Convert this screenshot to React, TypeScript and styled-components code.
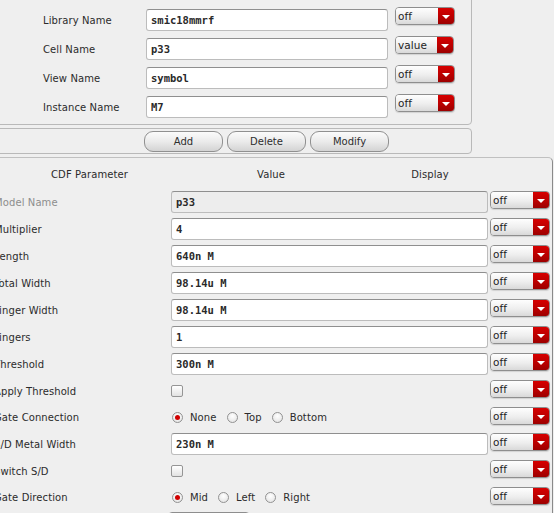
import React from "react";
import styled, { createGlobalStyle } from "styled-components";

const Global = createGlobalStyle`
  html, body { margin: 0; padding: 0; background: #efefef; }
  body { font-family: "DejaVu Sans", "Liberation Sans", sans-serif; }
`;

const Screen = styled.div`
  width: 554px;
  height: 513px;
  overflow: hidden;
  background: #efefef;
  font-family: "DejaVu Sans", "Liberation Sans", sans-serif;
  font-size: 10px;
  letter-spacing: 0.1px;
  color: #2b2b2b;
`;

const Canvas = styled.div`
  margin: -10px 0 0 -12px;
  display: flex;
  flex-direction: column;
  align-items: flex-start;
`;

const TopPanel = styled.div`
  box-sizing: border-box;
  width: 484px;
  border: 1px solid #b9b9b9;
  border-radius: 4px;
  padding: 14px 0 3px 54px;
  display: flex;
  flex-direction: column;
`;

const TopRow = styled.div`
  display: flex;
  align-items: flex-start;
  height: 29px;
`;

const TopLabel = styled.span`
  width: 103px;
  height: 22px;
  margin-top: 4px;
  display: flex;
  align-items: center;
`;

const Field = styled.div<{ $w: number; $disabled?: boolean }>`
  box-sizing: border-box;
  width: ${(p) => p.$w}px;
  height: 22px;
  border: 1px solid #bcbcbc;
  border-top-color: #8f8f8f;
  border-radius: 3px;
  background: ${(p) => (p.$disabled ? "#ededed" : "#ffffff")};
  padding-left: 4px;
  display: flex;
  align-items: center;
  font-family: "DejaVu Sans Mono", "Liberation Mono", monospace;
  font-weight: bold;
  font-size: 10.5px;
  letter-spacing: 0;
  color: #2a2a2a;
  white-space: pre;
`;

const TopField = styled(Field)`
  margin-top: 4px;
`;

const Drop = styled.div<{ $w: number }>`
  box-sizing: border-box;
  width: ${(p) => p.$w}px;
  height: 18px;
  display: flex;
  border: 1px solid #8e8e8e;
  border-radius: 4px;
  overflow: hidden;
  box-shadow: 0 1px 1px rgba(0, 0, 0, 0.12);
  align-self: flex-start;
`;

const DropText = styled.span`
  flex: 1;
  background: linear-gradient(#fefefe, #eeeeee 55%, #d9d9d9);
  padding-left: 2px;
  line-height: 16px;
  font-size: 10.5px;
  color: #1e1e1e;
`;

const DropArrow = styled.span`
  width: 16px;
  background: linear-gradient(#d60000, #b80000 60%, #9c0000);
  display: flex;
  align-items: center;
  justify-content: center;
  &::after {
    content: "";
    border-left: 4px solid transparent;
    border-right: 4px solid transparent;
    border-top: 4px solid #ffffff;
    margin-top: 1px;
  }
`;

const TopDrop = styled(Drop)`
  margin-left: 7px;
  margin-top: 2px;
`;

const ButtonBar = styled.div`
  box-sizing: border-box;
  width: 484px;
  margin-top: 3px;
  border: 1px solid #b9b9b9;
  border-radius: 4px;
  padding: 2px 0 1px 155px;
  display: flex;
  gap: 4px;
`;

const Button = styled.button`
  box-sizing: border-box;
  width: 79px;
  height: 21px;
  border: 1px solid #909090;
  border-radius: 9px;
  background: linear-gradient(#fbfbfb, #ebebeb 50%, #d3d3d3);
  font-family: "DejaVu Sans", "Liberation Sans", sans-serif;
  font-size: 10px;
  color: #2e2e2e;
  padding: 0;
`;

const CdfPanel = styled.div`
  box-sizing: border-box;
  width: 565px;
  margin-top: 3px;
  border: 1px solid #c0c0c0;
  border-right-color: #8a8a8a;
  border-radius: 5px 5px 0 0;
  padding: 0 2px 0 5px;
  display: flex;
  flex-direction: column;
`;

const Header = styled.div`
  display: grid;
  grid-template-columns: 191px 172px 146px;
  height: 33px;
  align-items: center;
  text-align: center;
`;

const Rows = styled.div`
  display: flex;
  flex-direction: column;
  gap: 5px;
`;

const Row = styled.div<{ $short?: boolean }>`
  display: grid;
  grid-template-columns: 175px 317px 60px;
  column-gap: 2px;
  height: ${(p) => (p.$short ? 21 : 22)}px;
  align-items: center;
`;

const Label = styled.span<{ $muted?: boolean }>`
  white-space: nowrap;
  color: ${(p) => (p.$muted ? "#8d8d8d" : "#2b2b2b")};
`;

const Cell = styled.div`
  display: flex;
  align-items: center;
`;

const Check = styled.span`
  box-sizing: border-box;
  width: 12px;
  height: 12px;
  border: 1px solid #959595;
  border-radius: 2px;
  background: linear-gradient(#ffffff, #e2e2e2);
`;

const RadioGroup = styled.div`
  display: flex;
  align-items: center;
  gap: 10px;
  padding-left: 1px;
`;

const RadioItem = styled.label`
  display: flex;
  align-items: center;
  gap: 7px;
`;

const Radio = styled.span<{ $on?: boolean }>`
  box-sizing: border-box;
  width: 11px;
  height: 11px;
  border-radius: 50%;
  border: 1px solid #929292;
  background: radial-gradient(circle at 50% 35%, #ffffff, #e0e0e0);
  display: flex;
  align-items: center;
  justify-content: center;
  &::after {
    content: "";
    width: 5px;
    height: 5px;
    border-radius: 50%;
    background: ${(p) => (p.$on ? "#d00000" : "transparent")};
  }
`;

const WideCombo = styled(Drop)`
  margin: -2px 0 0 -3px;
  height: 22px;
`;

type Opt = { label: string; on?: boolean };

const Dropdown = ({ w, text }: { w: number; text: string }) => (
  <Drop $w={w}>
    <DropText>{text}</DropText>
    <DropArrow />
  </Drop>
);

const Radios = ({ opts }: { opts: Opt[] }) => (
  <RadioGroup>
    {opts.map((o) => (
      <RadioItem key={o.label}>
        <Radio $on={o.on} />
        {o.label}
      </RadioItem>
    ))}
  </RadioGroup>
);

const topRows = [
  { label: "Library Name", value: "smic18mmrf", disp: "off" },
  { label: "Cell Name", value: "p33", disp: "value" },
  { label: "View Name", value: "symbol", disp: "off" },
  { label: "Instance Name", value: "M7", disp: "off" },
];

type CdfRow =
  | { kind: "field"; label: string; value: string; muted?: boolean }
  | { kind: "check"; label: string }
  | { kind: "radio"; label: string; opts: Opt[] };

const cdfRows: CdfRow[] = [
  { kind: "field", label: "Model Name", value: "p33", muted: true },
  { kind: "field", label: "Multiplier", value: "4" },
  { kind: "field", label: "Length", value: "640n M" },
  { kind: "field", label: "Total Width", value: "98.14u M" },
  { kind: "field", label: "Finger Width", value: "98.14u M" },
  { kind: "field", label: "Fingers", value: "1" },
  { kind: "field", label: "Threshold", value: "300n M" },
  { kind: "check", label: "Apply Threshold" },
  {
    kind: "radio",
    label: "Gate Connection",
    opts: [{ label: "None", on: true }, { label: "Top" }, { label: "Bottom" }],
  },
  { kind: "field", label: "S/D Metal Width", value: "230n M" },
  { kind: "check", label: "Switch S/D" },
  {
    kind: "radio",
    label: "Gate Direction",
    opts: [{ label: "Mid", on: true }, { label: "Left" }, { label: "Right" }],
  },
];

export default function App() {
  return (
    <Screen>
      <Global />
      <Canvas>
        <TopPanel>
          {topRows.map((r) => (
            <TopRow key={r.label}>
              <TopLabel>{r.label}</TopLabel>
              <TopField $w={242}>{r.value}</TopField>
              <TopDrop $w={r.disp === "value" ? 59 : 60}>
                <DropText>{r.disp}</DropText>
                <DropArrow />
              </TopDrop>
            </TopRow>
          ))}
        </TopPanel>
        <ButtonBar>
          <Button>Add</Button>
          <Button>Delete</Button>
          <Button>Modify</Button>
        </ButtonBar>
        <CdfPanel>
          <Header>
            <span>CDF Parameter</span>
            <span>Value</span>
            <span>Display</span>
          </Header>
          <Rows>
            {cdfRows.map((r) => (
              <Row key={r.label} $short={r.kind === "radio"}>
                <Label $muted={r.kind === "field" && r.muted}>{r.label}</Label>
                <Cell>
                  {r.kind === "field" && (
                    <Field $w={317} $disabled={r.muted}>
                      {r.value}
                    </Field>
                  )}
                  {r.kind === "check" && <Check />}
                  {r.kind === "radio" && <Radios opts={r.opts} />}
                </Cell>
                <Dropdown w={60} text="off" />
              </Row>
            ))}
            <Row>
              <Label />
              <Cell>
                <WideCombo $w={82}>
                  <DropText />
                  <DropArrow />
                </WideCombo>
              </Cell>
              <Dropdown w={60} text="off" />
            </Row>
          </Rows>
        </CdfPanel>
      </Canvas>
    </Screen>
  );
}
